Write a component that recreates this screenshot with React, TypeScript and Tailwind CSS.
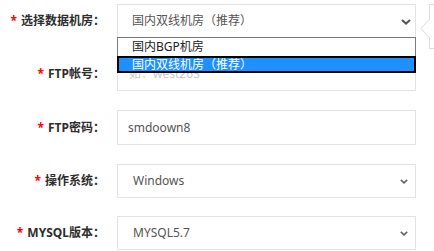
import React from "react";

function Chevron({ big }: { big?: boolean }) {
  return big ? (
    <svg width="10" height="6" viewBox="0 0 10 6" className="absolute right-[4px] top-[14px]">
      <path d="M1 1 L5 4.6 L9 1" fill="none" stroke="#555" strokeWidth="2" />
    </svg>
  ) : (
    <svg width="8" height="5" viewBox="0 0 8 5" className="absolute right-[7px] top-[14px]">
      <path d="M0.8 0.8 L4 3.8 L7.2 0.8" fill="none" stroke="#666" strokeWidth="1.6" />
    </svg>
  );
}

function Label({ text }: { text: string }) {
  return (
    <div className="w-[105px] shrink-0 text-right text-[12px] leading-[16px] font-bold text-[#2e2e2e] whitespace-nowrap">
      <span className="text-[#ff0000] mr-[4px]">*</span>
      {text}
    </div>
  );
}

export default function App() {
  return (
    <div className="relative w-[434px] h-[251px] overflow-hidden bg-white pt-[4px] font-['Noto_Sans','Noto_Sans_CJK_SC',sans-serif]">
      {/* Row 1 */}
      <div className="flex items-center">
        <Label text="选择数据机房：" />
        <div className="relative ml-[12px] w-[299px] h-[34px] border border-[#e3e3e3] flex items-center pl-[14px] text-[12px] text-[#555]">
          国内双线机房（推荐）
          <Chevron big />
        </div>
      </div>
      {/* Row 2 */}
      <div className="flex items-center mt-[18px]">
        <Label text="FTP帐号：" />
        <div className="ml-[12px] w-[299px] h-[35px] border border-[#e3e3e3] flex items-center pl-[11px] text-[12px] text-[#c8c8c8]">
          如：west263
        </div>
      </div>
      {/* Row 3 */}
      <div className="flex items-center mt-[19px]">
        <Label text="FTP密码：" />
        <div className="ml-[12px] w-[299px] h-[35px] border border-[#e3e3e3] flex items-center pl-[10px] text-[12px] text-[#555]">
          smdoown8
        </div>
      </div>
      {/* Row 4 */}
      <div className="flex items-center mt-[19px]">
        <Label text="操作系统：" />
        <div className="relative ml-[12px] w-[299px] h-[34px] border border-[#e3e3e3] flex items-center pl-[15px] text-[12px] text-[#555]">
          Windows
          <Chevron />
        </div>
      </div>
      {/* Row 5 */}
      <div className="flex items-center mt-[18px]">
        <Label text="MYSQL版本：" />
        <div className="relative ml-[12px] w-[299px] h-[34px] border border-[#e3e3e3] flex items-center pl-[15px] text-[12px] text-[#555]">
          MYSQL5.7
          <Chevron />
        </div>
      </div>

      {/* Open dropdown list */}
      <div className="absolute left-[117px] top-[37px] w-[299px] bg-white border border-[#7a7a7a] text-[12px]">
        <div className="h-[18px] flex items-center pl-[14px] text-[#222]">国内BGP机房</div>
        <div className="-mx-[1px] -mb-[1px] h-[17px] border-2 border-black bg-[#1e90ff] flex items-center pl-[13px] text-white">
          国内双线机房（推荐）
        </div>
      </div>

      {/* Tooltip on the right edge */}
      <div className="absolute left-[429px] top-[4px] w-[40px] h-[45px] border border-[#dcdcdc] bg-white" />
      <svg width="12" height="22" viewBox="0 0 12 22" className="absolute left-[420px] top-[18px]">
        <path d="M10 0.5 L1 10.5 L10 20.5" fill="#fff" stroke="#dcdcdc" strokeWidth="1" />
        <rect x="10" y="0" width="2" height="22" fill="#fff" />
      </svg>
    </div>
  );
}
